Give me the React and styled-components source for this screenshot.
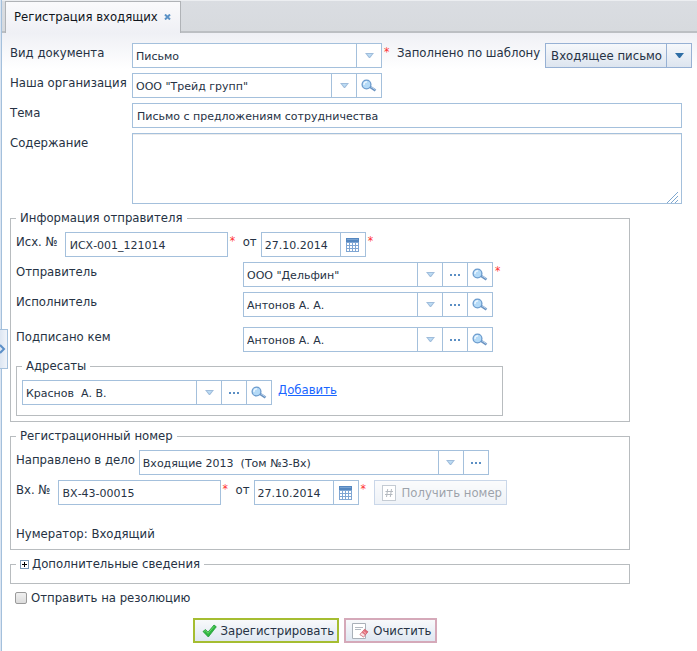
import React from "react";
import styled, { createGlobalStyle, css } from "styled-components";

const line = "#a4c0dc";
const textColor = "#263244";
const labelFont = '"DejaVu Sans Condensed", "DejaVu Sans", sans-serif';
const fieldFont = '"DejaVu Sans", sans-serif';

const GlobalStyle = createGlobalStyle`
  *, *::before, *::after { box-sizing: border-box; }
  body {
    margin: 0;
    background: #fff;
    color: ${textColor};
    font: 13px/20px ${labelFont};
  }
  button, input, textarea { font: inherit; color: inherit; margin: 0; border-radius: 0; }
  svg { display: block; flex: none; }
`;

const Page = styled.div`
  display: flex;
  min-height: 100vh;
`;

const Rail = styled.aside`
  position: relative;
  flex: none;
  width: 2px;
  background: #dbe5f2;
  border-right: 1px solid ${line};
`;

const RailHandle = styled.button`
  position: absolute;
  left: 0;
  top: 329px;
  width: 8px;
  height: 40px;
  padding: 0;
  display: flex;
  align-items: center;
  background: linear-gradient(90deg, #dde6f2, #f0f4fa);
  border: 1px solid ${line};
  border-left: 0;
`;

const Main = styled.main`
  flex: 1;
  min-width: 0;
`;

const TabBar = styled.div`
  display: flex;
  height: 33px;
  padding-left: 3px;
  background: linear-gradient(#dadde2, #d7dade);
  border-top: 1px solid #eceef1;
  border-bottom: 2px solid #bcbfc3;
`;

const Tab = styled.div`
  display: flex;
  align-items: center;
  gap: 6px;
  height: 32px;
  padding: 0 9px 2px 8px;
  background: linear-gradient(#fafafc, #eff0f5);
  border: 1px solid #b0b3b7;
  border-bottom: 0;
  color: #10151c;
  white-space: nowrap;
`;

const TabClose = styled.button`
  padding: 0;
  border: 0;
  background: none;
`;

const Form = styled.form`
  padding: 10px 6px 8px 8px;
  background: linear-gradient(#eff0f5, #fff 36px);
`;

const Stack = styled.div`
  display: flex;
  flex-direction: column;
  gap: 5px;
`;

const Row = styled.div`
  display: flex;
  align-items: flex-start;
  width: 100%;
  max-width: ${p => p.$max || "none"};
  margin-top: ${p => p.$top || "0"};
`;

const Label = styled.label`
  flex: none;
  width: ${p => p.$width || "auto"};
  margin-right: ${p => p.$gap || "0"};
  line-height: 20px;
  white-space: nowrap;
`;

const Star = styled.span`
  flex: none;
  width: 15px;
  padding-left: 2px;
  color: #f33;
  font-size: 12px;
  line-height: 18px;
`;

const fieldText = css`
  padding: 1px 4px 0;
  font: 11px/20px ${fieldFont};
  background: #fff;
  outline: 0;
`;

const TextField = styled.input`
  ${fieldText}
  flex: ${p => (p.$width ? "none" : "1")};
  width: ${p => p.$width || "auto"};
  min-width: 0;
  height: 25px;
  border: 1px solid ${line};
`;

const TextArea = styled.textarea`
  display: block;
  width: 100%;
  height: 71px;
  padding: 4px;
  border: 1px solid ${line};
  box-shadow: inset 0 1px 0 #ececec;
  font: 11px/16px ${fieldFont};
  resize: none;
`;

const AreaWrap = styled.div`
  position: relative;
  flex: 1;
  min-width: 0;
`;

const Grip = styled.svg`
  position: absolute;
  right: 4px;
  bottom: 1px;
`;

const ComboBox = styled.div`
  display: flex;
  flex: none;
  width: ${p => p.$width};
  height: 25px;
  border: 1px solid ${line};
  background: #fff;
`;

const ComboInput = styled.input`
  ${fieldText}
  flex: 1;
  min-width: 0;
  padding: 2px 3px 0;
  border: 0;
`;

const ComboButton = styled.button`
  display: flex;
  flex: none;
  align-items: center;
  justify-content: center;
  width: 25px;
  padding: 0;
  border: 0;
  border-left: 1px solid ${line};
  background: #fff;
`;

const SplitButton = styled.div`
  display: flex;
  flex: none;
  height: 25px;
  border: 1px solid #97b1d4;
  background: linear-gradient(#f6f8fb, #dde5ef);
`;

const SplitMain = styled.button`
  padding: 0 4px 0 5px;
  border: 0;
  background: none;
  white-space: nowrap;
`;

const SplitArrow = styled.button`
  display: flex;
  align-items: center;
  justify-content: center;
  width: 25px;
  padding: 0;
  border: 0;
  border-left: 1px solid #97b1d4;
  background: none;
`;

const Group = styled.fieldset`
  min-width: 0;
  max-width: ${p => p.$max || "620px"};
  margin: 5px 0 0;
  padding: 5px;
  padding-bottom: ${p => p.$bottom || "5px"};
  border: 1px solid #b8bcbf;
`;

const InnerGroup = styled(Group)`
  margin-top: 0;
`;

const Legend = styled.legend`
  display: flex;
  align-items: center;
  gap: 3px;
  height: 18px;
  padding: 0 4px;
  line-height: 18px;
`;

const Expander = styled.button`
  width: 9px;
  height: 9px;
  padding: 0;
  border: 0;
  background: none;
`;

const Link = styled.a`
  margin-left: 6px;
  color: #1a66ff;
  text-decoration: underline;
`;

const Note = styled.p`
  margin: 14px 0 0;
`;

const CheckRow = styled.label`
  display: flex;
  width: fit-content;
  align-items: center;
  gap: 4px;
  margin: 4px 0 0 5px;
`;

const CheckBox = styled.input`
  appearance: none;
  width: 12px;
  height: 12px;
  border: 1px solid #9a9a9a;
  border-radius: 2px;
  background: linear-gradient(#f0f0f0, #dcdcdc);
`;

const Actions = styled.div`
  display: flex;
  justify-content: center;
  gap: 5px;
  max-width: 610px;
  margin-top: 10px;
`;

const buttonColors = {
  plain: "1px solid #97b1d4",
  primary: "2px solid #a5bd31",
  danger: "2px solid #d5a9b9",
};

const ActionButton = styled.button`
  display: flex;
  flex: none;
  align-items: center;
  gap: 4px;
  height: 25px;
  padding: ${p => (p.$kind === "danger" ? "0 4px 0 6px" : "0 3px 0 7px")};
  border: ${p => buttonColors[p.$kind]};
  background: linear-gradient(#f8f9fb, #dfe7f1);
  white-space: nowrap;
  &:disabled { gap: 6px; padding: 0 4px 0 7px; color: #3c4858; opacity: 0.5; }
`;

const DownIcon = ({ strong }) => (
  <svg width="9" height="5" viewBox="0 0 9 5">
    <path d="M0 0H9L5 5H4Z" fill={strong ? "#2f6ea5" : "#9fbcdb"} />
    {!strong && <path d="M2 1H7L4.500 4Z" fill="#bcdcf4" />}
  </svg>
);

const DotsIcon = () => (
  <svg width="10" height="2" viewBox="0 0 10 2" fill="#5b8fc4">
    <rect width="2" height="2" /><rect x="4" width="2" height="2" /><rect x="8" width="2" height="2" />
  </svg>
);

const LensIcon = () => (
  <svg width="16" height="14" viewBox="0 0 16 14">
    <path d="M8.500 7.500L14.500 11.500" stroke="#6b93c0" strokeWidth="2.600" />
    <path d="M10 7.800L14.500 10.800" stroke="#b9d3ee" strokeWidth="1" />
    <circle cx="5.500" cy="5.500" r="4.400" fill="#b4daf7" stroke="#6b9bcd" strokeWidth="1.300" />
    <path d="M3 6C2.800 4 4.200 2.700 6 3" fill="none" stroke="#f2f9ff" strokeWidth="1.300" />
  </svg>
);

const CalendarIcon = () => (
  <svg width="13" height="14" viewBox="0 0 13 14">
    <rect width="13" height="14" fill="#7fa6d3" />
    <rect width="13" height="4" fill="#5487c0" />
    <rect x="1" y="1" width="11" height="1" fill="#79a3d2" />
    {[5, 8, 11].map(y => [1, 4, 7, 10].map(x => <rect key={`${x}-${y}`} x={x} y={y} width="2" height="2" fill="#fff" />))}
  </svg>
);

const NumberIcon = () => (
  <svg width="14" height="16" viewBox="0 0 14 16" fill="none">
    <rect x="0.500" y="0.500" width="13" height="15" fill="#fff" stroke="#8a98a8" />
    <path d="M5.700 4L4.500 12M9.500 4L8.300 12M3.500 6.500H11M3 9.500H10.500" stroke="#6d7783" />
  </svg>
);

const CheckIcon = () => (
  <svg width="15" height="14" viewBox="0 0 15 14">
    <path d="M1 7.500L3.500 5.500L6 8.200L12 1L14.300 2.800L6.300 13Z" fill="#2fb640" stroke="#1e9a35" strokeWidth="0.800" strokeLinejoin="round" />
    <path d="M2.300 7.500L3.500 6.600L6 9.300L12.200 2.200" fill="none" stroke="#6fdc70" strokeWidth="0.900" />
  </svg>
);

const ClearIcon = () => (
  <svg width="17" height="16" viewBox="0 0 17 16">
    <path d="M0.500 0.500H13.500V15.500H0.500Z" fill="#fff" stroke="#a9b0b8" />
    <path d="M3 4.500H11M3 6.500H9" stroke="#b4bac1" />
    <path d="M8 11.500L12.500 6.300L16 8.800L11.500 14Z" fill="#e5707d" stroke="#c95363" strokeWidth="0.700" strokeLinejoin="round" />
    <path d="M8 11.500L9.800 9.400L13.300 11.900L11.500 14Z" fill="#fbe3e6" stroke="#d78791" strokeWidth="0.700" />
    <path d="M11.500 8.500L14 10.500" stroke="#f5b4bb" />
  </svg>
);

const CloseIcon = () => (
  <svg width="7" height="6" viewBox="0 0 7 6">
    <path d="M1 0.500L6 5.500M6 0.500L1 5.500" stroke="#5b92c6" strokeWidth="2" />
  </svg>
);

const PlusIcon = () => (
  <svg width="9" height="9" viewBox="0 0 9 9">
    <rect x="0.500" y="0.500" width="8" height="8" fill="#fff" stroke="#7a98b4" />
    <path d="M2 4.500H7M4.500 2V7" stroke="#000" />
  </svg>
);

const icons = { list: DownIcon, dots: DotsIcon, search: LensIcon };
const iconNames = { list: "Открыть список", dots: "Выбрать", search: "Просмотр" };

function Combo({ id, label, value, width = "250px", buttons = ["list", "dots", "search"] }) {
  return (
    <ComboBox $width={width}>
      <ComboInput id={id} aria-label={label} defaultValue={value} />
      {buttons.map(name => {
        const Icon = icons[name];
        return <ComboButton key={name} type="button" aria-label={iconNames[name]}><Icon /></ComboButton>;
      })}
    </ComboBox>
  );
}

function DateField({ id, value }) {
  return (
    <ComboBox $width="105px">
      <ComboInput id={id} defaultValue={value} />
      <ComboButton type="button" aria-label="Календарь"><CalendarIcon /></ComboButton>
    </ComboBox>
  );
}

export default function App() {
  return (
    <Page>
      <GlobalStyle />
      <Rail>
        <RailHandle type="button" aria-label="Развернуть панель">
          <svg width="6" height="10" viewBox="0 0 6 10">
            <path d="M0 1L4 5L0 9" fill="none" stroke="#5b8fc8" strokeWidth="2" />
          </svg>
        </RailHandle>
      </Rail>
      <Main>
        <TabBar>
          <Tab>
            Регистрация входящих
            <TabClose type="button" aria-label="Закрыть"><CloseIcon /></TabClose>
          </Tab>
        </TabBar>
        <Form onSubmit={e => e.preventDefault()}>
          <Stack>
            <Row>
              <Label htmlFor="kind" $width="122px">Вид документа</Label>
              <Combo id="kind" value="Письмо" buttons={["list"]} />
              <Star>*</Star>
              <Label as="span" $gap="5px">Заполнено по шаблону</Label>
              <SplitButton>
                <SplitMain type="button">Входящее письмо</SplitMain>
                <SplitArrow type="button" aria-label="Выбрать шаблон"><DownIcon strong /></SplitArrow>
              </SplitButton>
            </Row>
            <Row>
              <Label htmlFor="org" $width="122px">Наша организация</Label>
              <Combo id="org" value={'ООО "Трейд групп"'} buttons={["list", "search"]} />
            </Row>
            <Row $max="672px">
              <Label htmlFor="subject" $width="122px">Тема</Label>
              <TextField id="subject" defaultValue="Письмо с предложениям сотрудничества" />
            </Row>
            <Row $max="672px">
              <Label htmlFor="body" $width="122px">Содержание</Label>
              <AreaWrap>
                <TextArea id="body" />
                <Grip width="11" height="11" viewBox="0 0 11 11" stroke="#7fa8cf">
                  <path d="M0 11L11 0M4 11L11 4M8 11L11 8" />
                </Grip>
              </AreaWrap>
            </Row>
          </Stack>

          <Group>
            <Legend>Информация отправителя</Legend>
            <Stack>
              <Row>
                <Label htmlFor="outNo" $gap="7px">Исх. №</Label>
                <TextField id="outNo" $width="163px" defaultValue="ИСХ-001_121014" />
                <Star>*</Star>
                <Label htmlFor="outDate" $gap="4px">от</Label>
                <DateField id="outDate" value="27.10.2014" />
                <Star>*</Star>
              </Row>
              <Row>
                <Label htmlFor="sender" $width="227px">Отправитель</Label>
                <Combo id="sender" value={'ООО "Дельфин"'} />
                <Star>*</Star>
              </Row>
              <Row>
                <Label htmlFor="executor" $width="227px">Исполнитель</Label>
                <Combo id="executor" value="Антонов А. А." />
              </Row>
              <Row $top="5px">
                <Label htmlFor="signer" $width="227px">Подписано кем</Label>
                <Combo id="signer" value="Антонов А. А." />
              </Row>
              <InnerGroup $max="487px" $bottom="10px">
                <Legend>Адресаты</Legend>
                <Row>
                  <Combo label="Адресат" value="Краснов  А. В." />
                  <Link href="#add">Добавить</Link>
                </Row>
              </InnerGroup>
            </Stack>
          </Group>

          <Group>
            <Legend>Регистрационный номер</Legend>
            <Stack>
              <Row>
                <Label htmlFor="file" $gap="4px">Направлено в дело</Label>
                <Combo id="file" width="350px" value="Входящие 2013  (Том №3-Вх)" buttons={["list", "dots"]} />
              </Row>
              <Row>
                <Label htmlFor="inNo" $gap="7px">Вх. №</Label>
                <TextField id="inNo" $width="163px" defaultValue="ВХ-43-00015" />
                <Star>*</Star>
                <Label htmlFor="inDate" $gap="4px">от</Label>
                <DateField id="inDate" value="27.10.2014" />
                <Star>*</Star>
                <ActionButton type="button" $kind="plain" disabled><NumberIcon />Получить номер</ActionButton>
              </Row>
              <Note>Нумератор: Входящий</Note>
            </Stack>
          </Group>

          <Group>
            <Legend>
              <Expander type="button" aria-label="Развернуть"><PlusIcon /></Expander>
              Дополнительные сведения
            </Legend>
          </Group>

          <CheckRow>
            <CheckBox type="checkbox" />
            Отправить на резолюцию
          </CheckRow>

          <Actions>
            <ActionButton type="submit" $kind="primary"><CheckIcon />Зарегистрировать</ActionButton>
            <ActionButton type="reset" $kind="danger"><ClearIcon />Очистить</ActionButton>
          </Actions>
        </Form>
      </Main>
    </Page>
  );
}
